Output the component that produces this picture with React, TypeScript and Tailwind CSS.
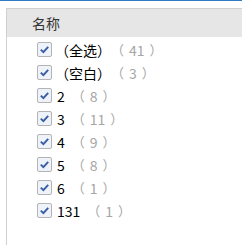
const rows: { label: string; count: number }[] = [
  { label: '（全选）', count: 41 },
  { label: '（空白）', count: 3 },
  { label: '2', count: 8 },
  { label: '3', count: 11 },
  { label: '4', count: 9 },
  { label: '5', count: 8 },
  { label: '6', count: 1 },
  { label: '131', count: 1 },
];

function Check() {
  return (
    <span className="flex h-[15px] w-[15px] shrink-0 items-center justify-center rounded-[2px] border border-[#b4b4b4] bg-[#eef2f9]">
      <svg width="11" height="11" viewBox="0 0 11 11" aria-hidden>
        <path d="M1.8 5.6 L4.4 8.1 L9.2 2.9" fill="none" stroke="#3c5ea6" strokeWidth="2" />
      </svg>
    </span>
  );
}

export default function App() {
  return (
    <div
      className="flex h-[245px] w-[242px] flex-col overflow-hidden bg-white"
      style={{ fontFamily: '"Noto Sans CJK SC", "Noto Sans", sans-serif' }}
    >
      <div className="h-px bg-[#2c7bc3]" />
      <div className="h-[7px] bg-white" />
      <div className="ml-[6px] flex flex-1 flex-col border-l border-t border-[#d0d0d0]">
        <div className="flex h-[28px] items-center bg-[#e6e6e6] pl-[25px] text-[14px] text-[#333333]">
          名称
        </div>
        <ul className="flex flex-col pt-[1px]">
          {rows.map((row) => {
            // full-width closing paren already carries its own right bearing
            const cjk = row.label.endsWith('）');
            return (
              <li key={row.label} className="flex h-[23px] items-center pl-[30px] text-[13px] leading-none">
                <Check />
                <span className={cjk ? 'ml-[3px] text-[14px] text-black' : 'ml-[5px] text-[14px] text-black'}>
                  {row.label}
                </span>
                <span className={cjk ? 'flex items-center text-[#a6a6a6]' : 'ml-[7px] flex items-center text-[#a6a6a6]'}>
                  <span>（</span>
                  <span className="mx-[5px] text-[14px]">{row.count}</span>
                  <span>）</span>
                </span>
              </li>
            );
          })}
        </ul>
      </div>
    </div>
  );
}
